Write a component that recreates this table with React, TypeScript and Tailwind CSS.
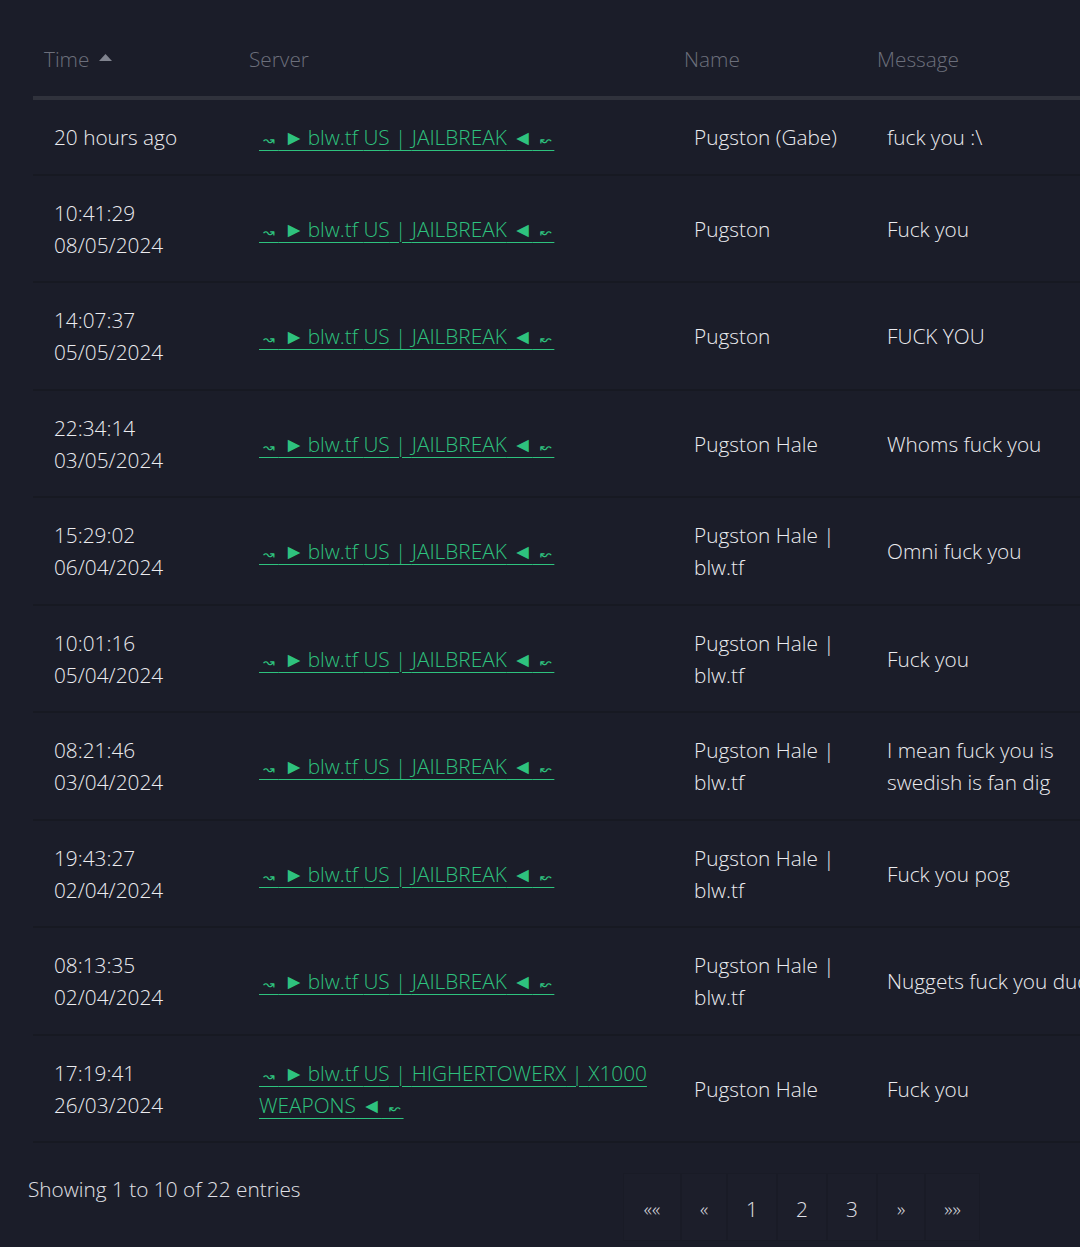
import React from "react";

type Row = { time: string[]; server: string[][]; name: string[]; message: string[] };

const JB = [["US", "JAILBREAK"]];

const rows: Row[] = [
  { time: ["20 hours ago"], server: JB, name: ["Pugston (Gabe)"], message: ["fuck you :\\"] },
  { time: ["10:41:29", "08/05/2024"], server: JB, name: ["Pugston"], message: ["Fuck you"] },
  { time: ["14:07:37", "05/05/2024"], server: JB, name: ["Pugston"], message: ["FUCK YOU"] },
  { time: ["22:34:14", "03/05/2024"], server: JB, name: ["Pugston Hale"], message: ["Whoms fuck you"] },
  { time: ["15:29:02", "06/04/2024"], server: JB, name: ["Pugston Hale |", "blw.tf"], message: ["Omni fuck you"] },
  { time: ["10:01:16", "05/04/2024"], server: JB, name: ["Pugston Hale |", "blw.tf"], message: ["Fuck you"] },
  { time: ["08:21:46", "03/04/2024"], server: JB, name: ["Pugston Hale |", "blw.tf"], message: ["I mean fuck you is", "swedish is fan dig"] },
  { time: ["19:43:27", "02/04/2024"], server: JB, name: ["Pugston Hale |", "blw.tf"], message: ["Fuck you pog"] },
  { time: ["08:13:35", "02/04/2024"], server: JB, name: ["Pugston Hale |", "blw.tf"], message: ["Nuggets fuck you dude"] },
  {
    time: ["17:19:41", "26/03/2024"],
    server: [["US", "HIGHERTOWERX", "X1000"], ["WEAPONS"]],
    name: ["Pugston Hale"],
    message: ["Fuck you"],
  },
];

function Lines({ lines }: { lines: string[] }) {
  return (
    <>
      {lines.map((l, i) => (
        <div key={i} className="whitespace-nowrap">
          {l}
        </div>
      ))}
    </>
  );
}

function ServerLink({ lines }: { lines: string[][] }) {
  const last = lines.length - 1;
  return (
    <a href="#" className="text-[#2ec27e] underline decoration-1 underline-offset-[5px]">
      {lines.map((parts, j) => (
        <React.Fragment key={j}>
          {j > 0 && <br />}
          {j === 0 && (
            <>
              <span className="text-[14px] leading-none">{"\u00a0↝\u00a0"}</span>
              {"\u00a0►\u2009blw.tf "}
            </>
          )}
          {parts.map((p, k) => (
            <React.Fragment key={k}>
              {k > 0 && "\u00a0|\u00a0"}
              {p}
            </React.Fragment>
          ))}
          {j === last && (
            <>
              {" ◄"}
              <span className="text-[14px] leading-none">{"\u00a0\u00a0↜\u2009"}</span>
            </>
          )}
        </React.Fragment>
      ))}
    </a>
  );
}

const cell = "pl-[21px] pr-[10px] pt-[21px] pb-[20.5px]";

export default function App() {
  const font = { fontFamily: '"Open Sans", "DejaVu Sans", sans-serif' };
  return (
    <div
      className="min-h-[1247px] w-[1080px] overflow-hidden bg-[#1b1d29] text-[20.8px] font-light leading-[32px] text-[#ececf0]"
      style={font}
    >
      <div className="pl-[33px] pt-[21px]">
        <table className="w-[1140px] table-fixed border-collapse">
          <colgroup>
            <col className="w-[205px]" />
            <col className="w-[435px]" />
            <col className="w-[193px]" />
            <col />
          </colgroup>
          <thead>
            <tr className="border-b-4 border-[#30323c] text-left text-[#6c6f7b]">
              <th className="pl-[11px] pt-[22px] pb-[21px] font-light">
                <span className="inline-flex items-center gap-[10px]">
                  Time
                  <svg width="13" height="8" viewBox="0 0 13 8" className="mb-[3px]">
                    <path d="M6.5 0 L13 7 L0 7 Z" fill="#80838e" />
                  </svg>
                </span>
              </th>
              <th className="pl-[11px] pt-[22px] pb-[21px] font-light">Server</th>
              <th className="pl-[11px] pt-[22px] pb-[21px] font-light">Name</th>
              <th className="pl-[11px] pt-[22px] pb-[21px] font-light">Message</th>
            </tr>
          </thead>
          <tbody>
            {rows.map((r, i) => (
              <tr key={i} className="border-b-2 border-[#171922] align-middle">
                <td className={cell}>
                  <Lines lines={r.time} />
                </td>
                <td className={cell}>
                  <ServerLink lines={r.server} />
                </td>
                <td className={cell}>
                  <Lines lines={r.name} />
                </td>
                <td className={cell}>
                  <Lines lines={r.message} />
                </td>
              </tr>
            ))}
          </tbody>
        </table>
      </div>
      <div className="flex items-start pl-[28px]">
        <div className="w-[595px] pt-[30px] text-[#e0e0e6]">Showing 1 to 10 of 22 entries</div>
        <div className="mt-[30px] flex h-[68px] text-[#e0e0e6]">
          {[
            ["««", "w-[58px]", "text-[19px]"],
            ["«", "w-[46px]", "text-[19px]"],
            ["1", "w-[50px]", ""],
            ["2", "w-[50px]", ""],
            ["3", "w-[50px]", ""],
            ["»", "w-[48px]", "text-[19px]"],
            ["»»", "w-[55px]", "text-[19px]"],
          ].map(([t, w, s], i) => (
            <div
              key={i}
              className={`flex items-center justify-center border border-[#191b26] bg-[#1c1e2a] pt-[4px] ${w} ${s}`}
            >
              {t}
            </div>
          ))}
        </div>
      </div>
    </div>
  );
}
